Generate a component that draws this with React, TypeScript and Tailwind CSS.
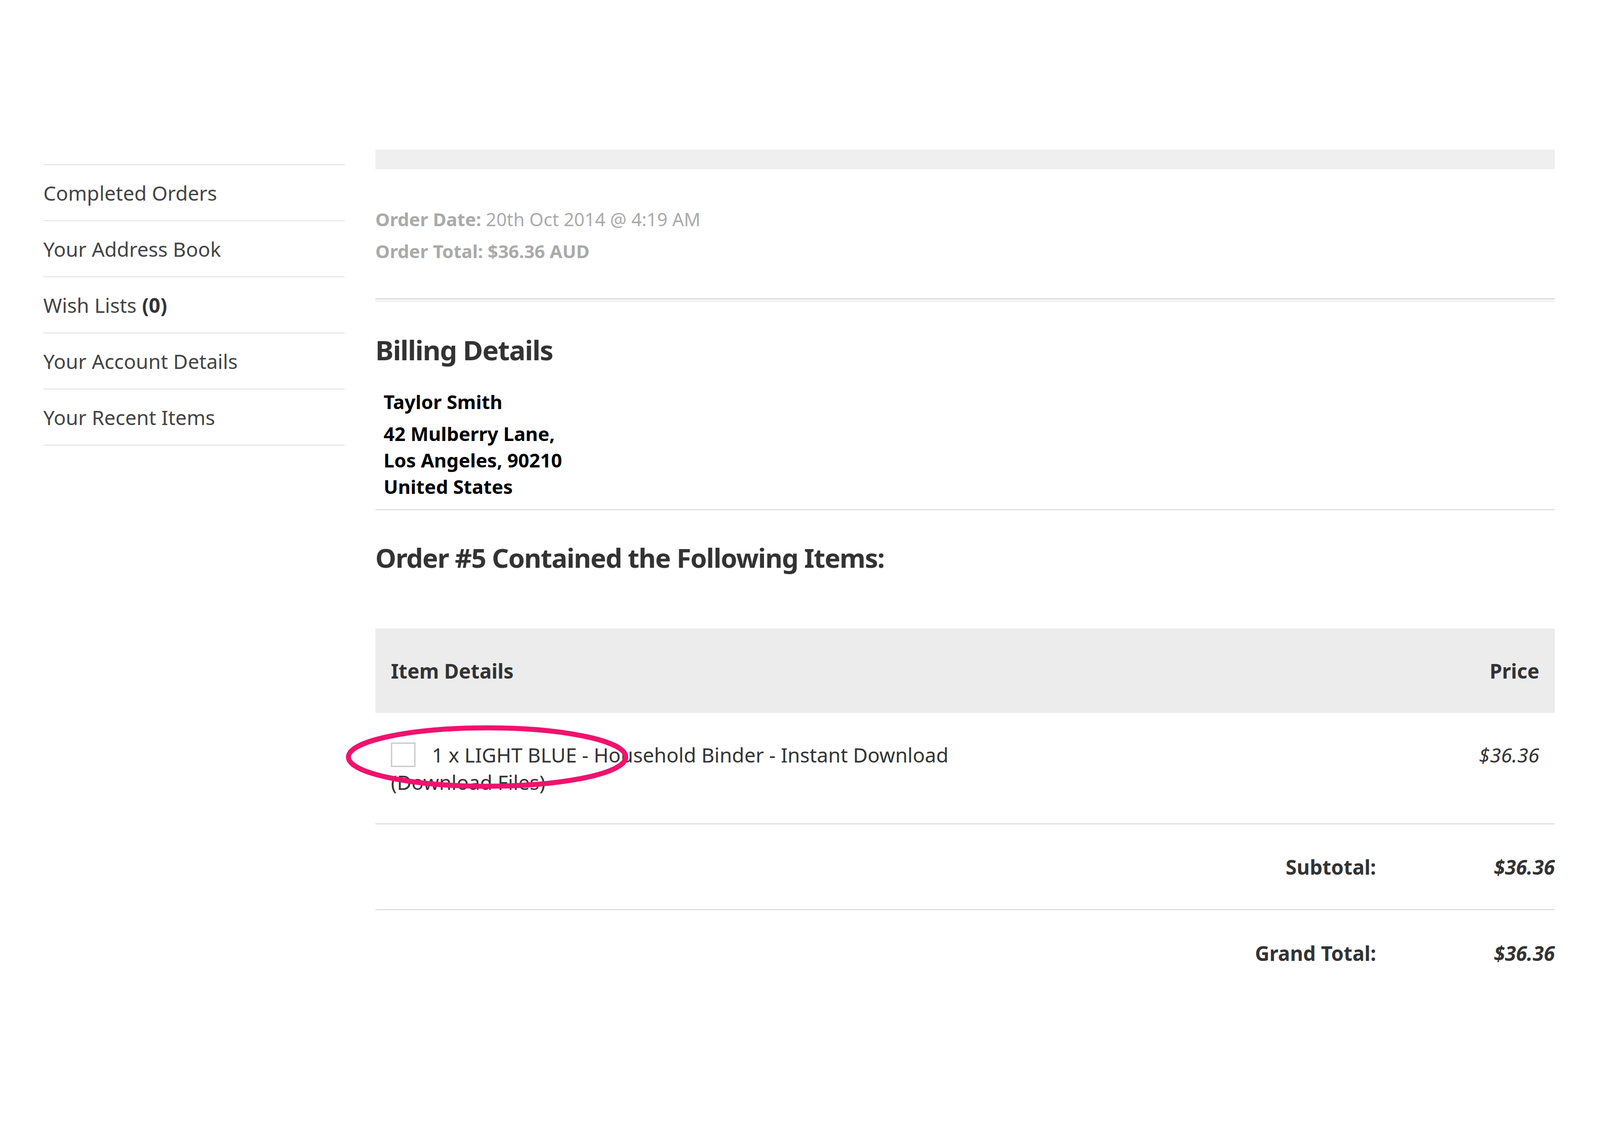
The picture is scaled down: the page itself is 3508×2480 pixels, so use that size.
export default function App() {
  const links = ['Completed Orders', 'Your Address Book', 'Wish Lists', 'Your Account Details', 'Your Recent Items'];
  return (
    <div className="w-[3508px] h-[2480px] bg-white flex pt-[328px] font-['Liberation_Sans',Arial,sans-serif]">
      <aside className="ml-[95px] w-[661px] pt-[32px]">
        <ul className="border-t-2 border-[#e3e3e3]">
          {links.map((l) => (
            <li key={l} className="h-[123px] flex items-center border-b-2 border-[#e3e3e3] text-[44px] text-[#444]">
              {l}
              {l === 'Wish Lists' && <b className="ml-[12px] text-[#333]">(0)</b>}
            </li>
          ))}
        </ul>
      </aside>
      <main className="ml-[67px] w-[2586px] flex flex-col">
        <div className="h-[43px] bg-[#efefef]" />
        <div className="pt-[75px] text-[40px] text-[#aaa] leading-[70px]">
          <div><b>Order Date:</b> 20th Oct 2014 @ 4:19 AM</div>
          <div className="font-bold">Order Total: $36.36 AUD</div>
        </div>
        <div className="mt-[68px] border-t-[3px] border-b-[3px] border-t-[#ddd] border-b-[#eee] h-[8px]" />
        <h2 className="mt-[60px] text-[60px] font-bold text-[#333] font-['Open_Sans',sans-serif] tracking-tight">Billing Details</h2>
        <div className="mt-[40px] ml-[18px] text-[42px] font-bold text-black font-['Lato',sans-serif] leading-[58px]">
          <div className="mb-[12px]">Taylor Smith</div>
          <div>42 Mulberry Lane,</div>
          <div>Los Angeles, 90210</div>
          <div>United States</div>
        </div>
        <div className="mt-[20px] border-t-[3px] border-[#e3e3e3]" />
        <h2 className="mt-[60px] text-[58px] font-bold text-[#333] font-['Open_Sans',sans-serif] tracking-tight">Order #5 Contained the Following Items:</h2>
        <div className="mt-[112px] h-[185px] bg-[#ececec] flex items-center justify-between px-[34px] text-[44px] font-bold text-[#333]">
          <span>Item Details</span>
          <span>Price</span>
        </div>
        <div className="relative flex justify-between px-[34px] pt-[62px] pb-[60px] border-b-[3px] border-[#e3e3e3] text-[44px] text-[#333]">
          <div className="leading-[60px]">
            <div className="flex items-center">
              <span className="inline-block w-[54px] h-[54px] border-[3px] border-[#ccc] mr-[36px]" />
              1 x LIGHT BLUE - Household Binder - Instant Download
            </div>
            <div>(Download Files)</div>
          </div>
          <span className="italic leading-[60px]">$36.36</span>
          <svg className="absolute left-[-67px] top-[22px]" width="630" height="150" viewBox="0 0 630 150">
            <ellipse cx="312" cy="75" rx="304" ry="64" fill="none" stroke="#f0126e" strokeWidth="11" />
          </svg>
        </div>
        <div className="flex justify-end items-center h-[188px] border-b-[3px] border-[#e3e3e3] text-[44px] font-bold text-[#333]">
          <span>Subtotal:</span>
          <span className="w-[392px] text-right italic">$36.36</span>
        </div>
        <div className="flex justify-end items-center h-[188px] text-[44px] font-bold text-[#333]">
          <span>Grand Total:</span>
          <span className="w-[392px] text-right italic">$36.36</span>
        </div>
      </main>
    </div>
  );
}
